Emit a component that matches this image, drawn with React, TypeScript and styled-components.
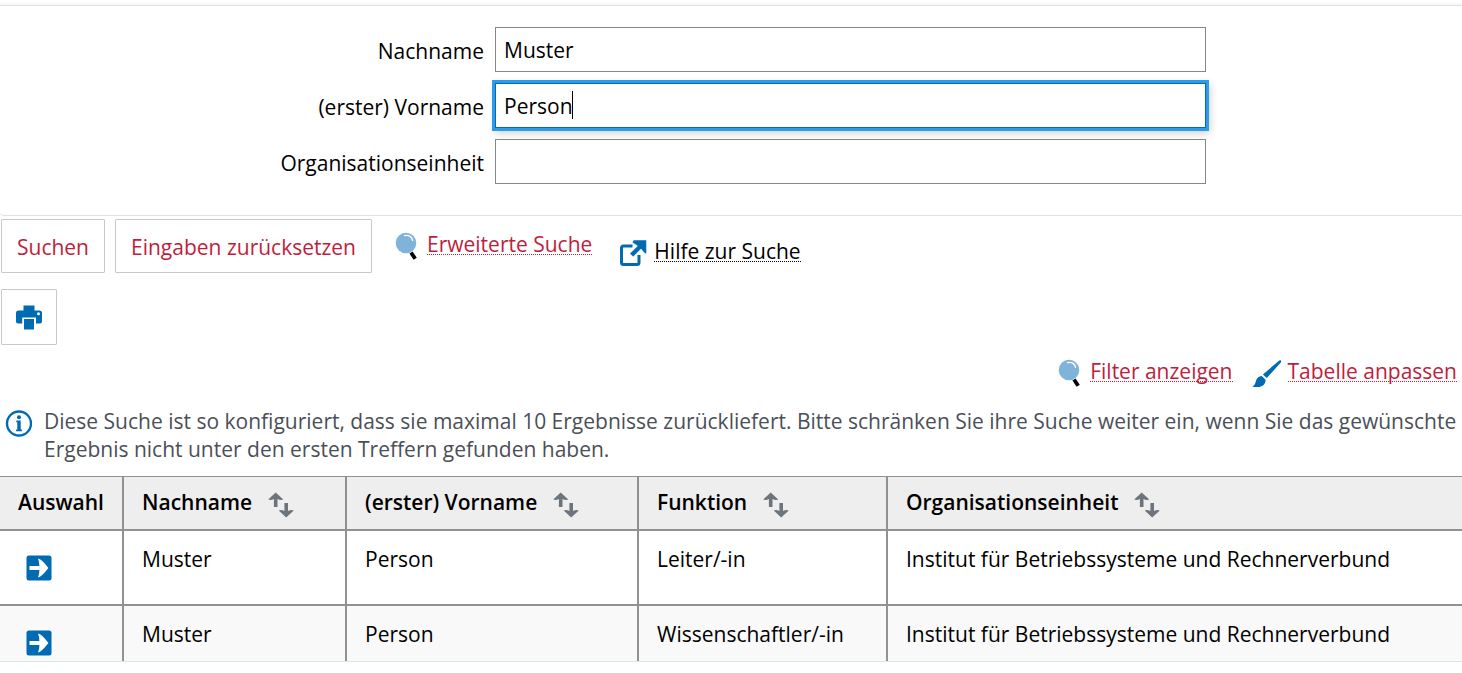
import React, { useState } from 'react';
import styled, { createGlobalStyle } from 'styled-components';

const GlobalStyle = createGlobalStyle`
  *, *::before, *::after { box-sizing: border-box; }
  body {
    margin: 0;
    background: #fff;
    color: #000;
    font-family: 'Open Sans', 'Noto Sans', sans-serif;
    font-size: 21px;
    line-height: 28px;
  }
  button, input { font: inherit; }
  svg { flex-shrink: 0; }
`;

const BLUE = '#006ab3';

const Page = styled.main`
  padding-top: 3px;
`;

const SearchPanel = styled.section`
  border-top: 2px solid #f8f8f8;
`;

const Fields = styled.div`
  display: grid;
  gap: 11px;
  padding: 21px 0 31px;
  border-top: 1px solid #e0e0e0;
  border-bottom: 1px solid #e0e0e0;
  border-bottom-left-radius: 4px;
`;

const Field = styled.div`
  display: grid;
  grid-template-columns: 484fr 711fr 245fr;
  column-gap: 11px;
  align-items: center;
`;

const FieldLabel = styled.label`
  padding-top: 2px;
  text-align: right;
`;

const InputWrap = styled.div`
  position: relative;
  display: flex;
`;

const TextInput = styled.input<{ $active?: boolean }>`
  width: 100%;
  height: 45px;
  padding: 0 8px;
  border: 1px solid ${(p) => (p.$active ? BLUE : '#878787')};
  border-radius: 0;
  outline: none;
  background: #fff;
  color: #000;
  caret-color: transparent;
  box-shadow: ${(p) => (p.$active ? '0 0 0 3px #2b9bea, 2px 3px 8px 2px rgba(0, 0, 0, 0.2)' : 'none')};
`;

const Caret = styled.span`
  position: absolute;
  top: 8px;
  left: 77px;
  width: 1px;
  height: 28px;
  background: #000;
`;

const Actions = styled.div`
  display: flex;
  gap: 10px;
  padding: 3px 1px 0;
`;

const BoxButton = styled.button<{ $square?: boolean }>`
  display: flex;
  align-items: center;
  justify-content: center;
  width: ${(p) => (p.$square ? '56px' : 'auto')};
  height: ${(p) => (p.$square ? '56px' : '54px')};
  padding: ${(p) => (p.$square ? '2px 0 0' : '2px 15px 0')};
  border: 1px solid #c8c8c8;
  border-radius: 1px;
  background: #fff;
  color: #be1e3c;
  cursor: pointer;
`;

const IconLink = styled.a<{ $dark?: boolean; $gap: number }>`
  display: flex;
  align-items: flex-start;
  gap: ${(p) => p.$gap}px;
  color: ${(p) => (p.$dark ? '#000' : '#be1e3c')};
  text-decoration: none;
`;

const LinkText = styled.span`
  height: 24px;
  line-height: 26px;
  border-bottom: 1px dotted currentColor;
`;

const ActionLinks = styled.div`
  display: flex;
  gap: 28px;
  padding: 12px 0 0 13px;

  a + a { padding-top: 7px; }
`;

const PrintRow = styled.div`
  padding: 16px 1px 0;
`;

const TableTools = styled.div`
  display: flex;
  justify-content: flex-end;
  gap: 19px;
  padding: 13px 5px 0;
`;

const Notice = styled.div`
  display: flex;
  gap: 12px;
  padding: 19px 5px 13px;
  color: #4b4f58;

  p { margin: 0; }
  svg { margin-top: 3px; }
`;

const Results = styled.div`
  border-bottom: 1px solid #d9e8ec;
`;

const Table = styled.table`
  width: 100%;
  table-layout: fixed;
  border-collapse: separate;
  border-spacing: 0;
`;

const Col = styled.col<{ $width?: number }>`
  width: ${(p) => (p.$width ? `${p.$width}px` : 'auto')};
`;

const HeadCell = styled.th`
  height: 55px;
  padding: 0 0 2px 18px;
  border-top: 1px solid #919191;
  border-bottom: 2px solid #919191;
  background: #eee;
  font-weight: 600;
  text-align: left;
  vertical-align: middle;

  &:not(:last-child) { border-right: 2px solid #919191; }
`;

const HeadContent = styled.div`
  display: flex;
  align-items: center;
  gap: 16px;
`;

const SortButton = styled.button`
  display: flex;
  padding: 5px 0 0;
  border: 0;
  background: none;
  cursor: pointer;
`;

const Row = styled.tr<{ $last: boolean }>`
  background: ${(p) => (p.$last ? '#f9f9f9' : '#fff')};

  td {
    height: ${(p) => (p.$last ? '55px' : '75px')};
    border-bottom: ${(p) => (p.$last ? '0' : '2px solid #919191')};
  }
`;

const Cell = styled.td`
  padding: 14px 0 0 18px;
  vertical-align: top;

  &:first-child { padding: 24px 0 0 26px; }
  &:not(:last-child) { border-right: 2px solid #919191; }
`;

const RowLink = styled.a`
  display: flex;
  width: 26px;
`;

const MagnifierIcon = () => (
  <svg width="24" height="29" viewBox="0 0 24 29" aria-hidden="true">
    <path d="M16 21.500l4.200 6.300" stroke="#000" strokeWidth="3.800" strokeLinecap="butt" />
    <circle cx="11" cy="12" r="10.300" fill="#7fb3d9" />
    <path d="M9.500 4.600c4.600-1 7.600 1.400 8.100 4.800" fill="none" stroke="#fff" strokeWidth="1.400" strokeLinecap="round" />
  </svg>
);

const ExternalIcon = () => (
  <svg width="27" height="29" viewBox="0 0 27 29" aria-hidden="true">
    <path d="M12.500 8H3.500A2 2 0 0 0 1.500 10V24.500a2 2 0 0 0 2 2H17a2 2 0 0 0 2-2V17" fill="none" stroke={BLUE} strokeWidth="3" />
    <path d="M9.800 15.600L17.500 7.900L12.300 4.500L13.500 2H26.500V16L24.300 15L21 10.900L13.200 18.800Z" fill={BLUE} stroke="#fff" strokeWidth="0.500" />
  </svg>
);

const PrinterIcon = () => (
  <svg width="28" height="26" viewBox="0 0 28 26" aria-hidden="true">
    <path
      d="M8.500 0.500h11v5h5a2.500 2.500 0 0 1 2.500 2.500v8.500a2 2 0 0 1-2 2H21V12.500H7.200v6H3a2 2 0 0 1-2-2V8a2.500 2.500 0 0 1 2.500-2.500h5z"
      fill={BLUE}
    />
    <circle cx="23.500" cy="8.800" r="1.500" fill="#fff" />
    <path d="M9 14h10v10.500H9z" fill={BLUE} />
  </svg>
);

const BrushIcon = () => (
  <svg width="30" height="30" viewBox="0 0 30 30" aria-hidden="true">
    <path d="M28.600 2.300c.8.500.7 1.300.2 2.100L14.800 20l-3.900-3.600L26.400 3.200c.8-.7 1.500-1.200 2.200-.9z" fill={BLUE} />
    <path d="M9.700 18l3.900 3.700c-.1 4.800-3.600 7.400-8 7.300C3.500 29.100 2 29 .3 28.400c2-.6 2.700-2.200 3.400-4.700.9-3.500 3-5.700 6-5.700z" fill={BLUE} />
  </svg>
);

const InfoIcon = () => (
  <svg width="27" height="27" viewBox="0 0 27 27" aria-hidden="true">
    <circle cx="14" cy="13.500" r="12" fill="none" stroke={BLUE} strokeWidth="2.400" />
    <circle cx="14" cy="7.200" r="2" fill={BLUE} />
    <path d="M11.300 10.600h4.400v9h1.200v1.600h-5.800v-1.600h1.200v-7.400h-1z" fill={BLUE} />
  </svg>
);

const SortIcon = () => (
  <svg width="26" height="26" viewBox="0 0 26 26" aria-hidden="true">
    <path d="M7.700 0.500L15.300 7.500Q12.500 8.600 9.500 7V15H5.900V7Q3 8.600 0.200 7.500Z" fill="#6c757d" />
    <path d="M18.200 25.500L25.800 18.500Q23 17.400 20 19V11H16.400V19Q13.500 17.400 10.700 18.500Z" fill="#6c757d" />
  </svg>
);

const ArrowIcon = () => (
  <svg width="26" height="26" viewBox="0 0 26 26" aria-hidden="true">
    <rect x="0.500" y="0.500" width="25" height="25" rx="2.500" fill={BLUE} />
    <path d="M12 3.600Q15.500 4 22.400 13Q15.500 22 12 22.400Q13.500 18.500 13.400 15H3.500V11H13.400Q13.500 7.500 12 3.600Z" fill="#fff" />
  </svg>
);

const columns = ['Nachname', '(erster) Vorname', 'Funktion', 'Organisationseinheit'];

const people = [
  ['Muster', 'Person', 'Leiter/-in', 'Institut für Betriebssysteme und Rechnerverbund'],
  ['Muster', 'Person', 'Wissenschaftler/-in', 'Institut für Betriebssysteme und Rechnerverbund'],
];

export default function App() {
  const [lastName, setLastName] = useState('Muster');
  const [firstName, setFirstName] = useState('Person');
  const [unit, setUnit] = useState('');

  return (
    <Page>
      <GlobalStyle />
      <SearchPanel>
        <Fields>
          <Field>
            <FieldLabel htmlFor="lastName">Nachname</FieldLabel>
            <InputWrap>
              <TextInput id="lastName" value={lastName} onChange={(e) => setLastName(e.target.value)} />
            </InputWrap>
          </Field>
          <Field>
            <FieldLabel htmlFor="firstName">(erster) Vorname</FieldLabel>
            <InputWrap>
              <TextInput id="firstName" $active value={firstName} onChange={(e) => setFirstName(e.target.value)} />
              <Caret />
            </InputWrap>
          </Field>
          <Field>
            <FieldLabel htmlFor="unit">Organisationseinheit</FieldLabel>
            <InputWrap>
              <TextInput id="unit" value={unit} onChange={(e) => setUnit(e.target.value)} />
            </InputWrap>
          </Field>
        </Fields>
      </SearchPanel>

      <Actions>
        <BoxButton type="button">Suchen</BoxButton>
        <BoxButton type="button">Eingaben zurücksetzen</BoxButton>
        <ActionLinks>
          <IconLink href="#erweitert" $gap={8}>
            <MagnifierIcon />
            <LinkText>Erweiterte Suche</LinkText>
          </IconLink>
          <IconLink href="#hilfe" $dark $gap={7}>
            <ExternalIcon />
            <LinkText>Hilfe zur Suche</LinkText>
          </IconLink>
        </ActionLinks>
      </Actions>

      <PrintRow>
        <BoxButton type="button" $square aria-label="Drucken">
          <PrinterIcon />
        </BoxButton>
      </PrintRow>

      <TableTools>
        <IconLink href="#filter" $gap={8}>
          <MagnifierIcon />
          <LinkText>Filter anzeigen</LinkText>
        </IconLink>
        <IconLink href="#tabelle" $gap={6}>
          <BrushIcon />
          <LinkText>Tabelle anpassen</LinkText>
        </IconLink>
      </TableTools>

      <Notice>
        <InfoIcon />
        <p>
          Diese Suche ist so konfiguriert, dass sie maximal 10 Ergebnisse zurückliefert. Bitte schränken Sie ihre
          Suche weiter ein, wenn Sie das gewünschte Ergebnis nicht unter den ersten Treffern gefunden haben.
        </p>
      </Notice>

      <Results>
        <Table>
          <colgroup>
            <Col $width={124} />
            <Col $width={223} />
            <Col $width={292} />
            <Col $width={249} />
            <Col />
          </colgroup>
          <thead>
            <tr>
              <HeadCell scope="col">Auswahl</HeadCell>
              {columns.map((name) => (
                <HeadCell key={name} scope="col">
                  <HeadContent>
                    {name}
                    <SortButton type="button" aria-label={`${name} sortieren`}>
                      <SortIcon />
                    </SortButton>
                  </HeadContent>
                </HeadCell>
              ))}
            </tr>
          </thead>
          <tbody>
            {people.map((person, i) => (
              <Row key={i} $last={i === people.length - 1}>
                <Cell>
                  <RowLink href="#person" aria-label="Person auswählen">
                    <ArrowIcon />
                  </RowLink>
                </Cell>
                {person.map((value, j) => (
                  <Cell key={j}>{value}</Cell>
                ))}
              </Row>
            ))}
          </tbody>
        </Table>
      </Results>
    </Page>
  );
}
